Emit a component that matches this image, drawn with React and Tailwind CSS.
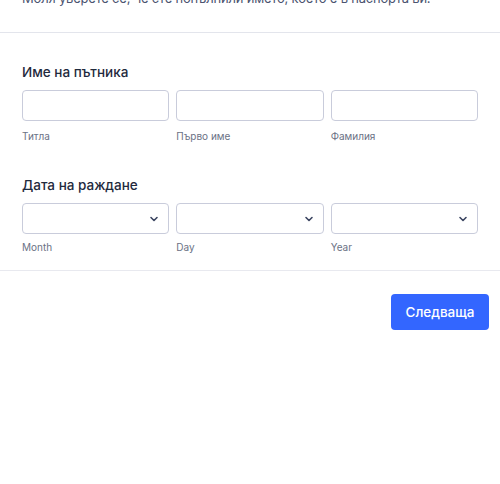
import React from "react";

const Chevron = () => (
  <svg width="12" height="12" viewBox="0 0 12 12" fill="none" className="shrink-0">
    <path d="M3 4.5L6 7.5L9 4.5" stroke="#3b4561" strokeWidth="1.6" strokeLinecap="round" strokeLinejoin="round" />
  </svg>
);

function TextField({ label }) {
  return (
    <div className="flex flex-col">
      <div className="h-[31px] rounded-[4px] border border-[#c9ccdb] bg-white" />
      <div className="mt-[8px] text-[10px] leading-[14px] text-[#6b7285]">{label}</div>
    </div>
  );
}

function SelectField({ label }) {
  return (
    <div className="flex flex-col">
      <div className="h-[31px] rounded-[4px] border border-[#c9ccdb] bg-white flex items-center justify-end pr-[8px]">
        <Chevron />
      </div>
      <div className="mt-[6px] text-[10px] leading-[14px] text-[#6b7285]">{label}</div>
    </div>
  );
}

export default function App() {
  return (
    <div className="w-[500px] h-[484px] overflow-hidden bg-white" style={{ fontFamily: "Inter, 'Noto Sans', sans-serif" }}>
      <div className="mt-[-13px] px-[22px] pb-[23px] border-b border-[#e3e5ec]">
        <p className="whitespace-nowrap text-[13px] tracking-[-0.2px] leading-[22px] text-[#4b5470]">
          Моля уверете се, че сте попълнили името, което е в паспорта ви.
        </p>
      </div>
      <div className="px-[22px] pt-[30px] pb-[16px] border-b border-[#e8e9ef]">
        <div className="text-[13.5px] leading-[18px] font-medium text-[#1f2a3d]">Име на пътника</div>
        <div className="mt-[9px] grid grid-cols-3 gap-[7px]">
          <TextField label="Титла" />
          <TextField label="Първо име" />
          <TextField label="Фамилия" />
        </div>
        <div className="mt-[33px] text-[13.5px] leading-[18px] font-medium text-[#1f2a3d]">Дата на раждане</div>
        <div className="mt-[9px] grid grid-cols-3 gap-[7px]">
          <SelectField label="Month" />
          <SelectField label="Day" />
          <SelectField label="Year" />
        </div>
      </div>
      <div className="flex justify-end pr-[11px] pt-[23px]">
        <button className="h-[36px] w-[98px] rounded-[4px] bg-[#3366ff] text-white text-[13.5px] font-medium">
          Следваща
        </button>
      </div>
    </div>
  );
}
